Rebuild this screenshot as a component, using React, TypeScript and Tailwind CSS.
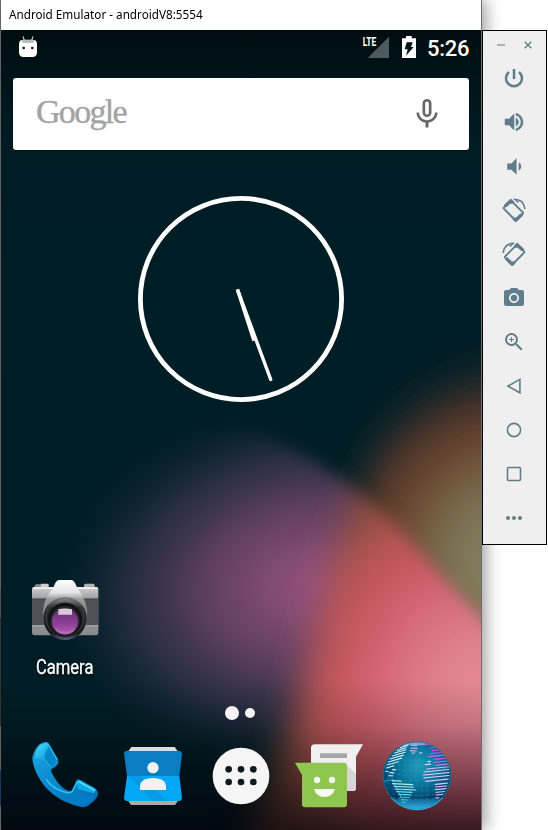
import React from "react";
import {
  MdVolumeDown,
  MdCameraAlt,
  MdZoomIn,
  MdMoreHoriz,
  MdMicNone,
} from "react-icons/md";

function Wallpaper() {
  return (
    <svg className="absolute inset-0 h-full w-full" viewBox="1 30 480 800" preserveAspectRatio="none">
      <defs>
        <linearGradient id="base" x1="0" y1="0" x2="0" y2="1">
          <stop offset="0" stopColor="#001b22" />
          <stop offset="0.3" stopColor="#001e26" />
          <stop offset="1" stopColor="#001d25" />
        </linearGradient>
        <radialGradient id="olive" gradientUnits="userSpaceOnUse" cx="520" cy="565" r="205">
          <stop offset="0" stopColor="#8c8664" />
          <stop offset="0.22" stopColor="#837b5b" />
          <stop offset="0.38" stopColor="#787050" />
          <stop offset="0.6" stopColor="#6f472f" />
          <stop offset="0.78" stopColor="#5c392b" stopOpacity="0.9" />
          <stop offset="1" stopColor="#3a2a2a" stopOpacity="0.1" />
        </radialGradient>
        <radialGradient
          id="purple"
          gradientUnits="userSpaceOnUse"
          cx="0"
          cy="0"
          r="1"
          gradientTransform="translate(318 585) rotate(-6) scale(262 188)"
        >
          <stop offset="0" stopColor="#92507f" />
          <stop offset="0.2" stopColor="#7f4a72" />
          <stop offset="0.45" stopColor="#604061" stopOpacity="0.94" />
          <stop offset="0.7" stopColor="#3d3750" stopOpacity="0.68" />
          <stop offset="0.86" stopColor="#2a3144" stopOpacity="0.32" />
          <stop offset="1" stopColor="#1a2c3c" stopOpacity="0" />
        </radialGradient>
        <radialGradient id="red" gradientUnits="userSpaceOnUse" cx="490" cy="690" r="245">
          <stop offset="0" stopColor="#e68d98" />
          <stop offset="0.2" stopColor="#e08390" />
          <stop offset="0.42" stopColor="#d66a7c" />
          <stop offset="0.55" stopColor="#cb5b66" />
          <stop offset="0.7" stopColor="#bd5556" />
          <stop offset="0.85" stopColor="#94503f" />
          <stop offset="1" stopColor="#6a4230" />
        </radialGradient>
        <linearGradient id="shade" gradientUnits="userSpaceOnUse" x1="0" y1="680" x2="0" y2="830">
          <stop offset="0" stopColor="#000" stopOpacity="0" />
          <stop offset="0.3" stopColor="#000" stopOpacity="0.13" />
          <stop offset="0.65" stopColor="#020006" stopOpacity="0.42" />
          <stop offset="1" stopColor="#020008" stopOpacity="0.72" />
        </linearGradient>
        <linearGradient id="topShade" gradientUnits="userSpaceOnUse" x1="0" y1="30" x2="0" y2="150">
          <stop offset="0" stopColor="#000" stopOpacity="0.5" />
          <stop offset="1" stopColor="#000" stopOpacity="0" />
        </linearGradient>
        <filter id="b8" x="-20%" y="-20%" width="140%" height="140%">
          <feGaussianBlur stdDeviation="8" />
        </filter>
        <filter id="b18" x="-30%" y="-30%" width="160%" height="160%">
          <feGaussianBlur stdDeviation="18" />
        </filter>
        <mask id="petal" maskUnits="userSpaceOnUse" x="-60" y="300" width="660" height="640">
          <path
            d="M-40 480 C60 410 180 405 250 430 C310 450 365 490 410 540 C445 580 485 624 560 690 L560 930 L-40 930 Z"
            fill="#fff"
            filter="url(#b8)"
          />
        </mask>
      </defs>
      <rect x="1" y="30" width="480" height="800" fill="url(#base)" />
      <path
        d="M350 520 C365 430 420 360 530 340 L560 740 L400 720 Z"
        fill="url(#olive)"
        filter="url(#b18)"
      />
      <g mask="url(#petal)">
        <rect x="1" y="400" width="480" height="430" fill="url(#purple)" />
        <path
          d="M376 440 C342 530 322 590 308 660 C296 720 270 780 236 880 L620 880 L620 440 Z"
          fill="url(#red)"
          filter="url(#b18)"
        />
      </g>
      <rect x="1" y="680" width="480" height="150" fill="url(#shade)" />
      <rect x="1" y="30" width="480" height="120" fill="url(#topShade)" />
    </svg>
  );
}

function StatusBar() {
  return (
    <div className="flex h-9 items-start pl-[17px] pr-3 pt-[5px]">
      <svg className="h-[23px] w-5" viewBox="54 105 60 69">
        <path d="M69 109l4 12M99 109l-4 12" stroke="#e8eaea" strokeWidth="3" />
        <path d="M57 132Q57 119 71 119H97Q111 119 111 132V157Q111 171 97 171H71Q57 171 57 157Z" fill="#fff" />
        <path d="M64 120H104L100 129H68Z" fill="#b9bfc0" />
        <circle cx="71" cy="144" r="4" fill="#0a1a1f" />
        <circle cx="97" cy="144" r="4" fill="#0a1a1f" />
      </svg>
      <svg className="ml-auto h-[25px] w-[55px]" viewBox="186 105 165 75">
        <path d="M267 110V174H203Z" fill="#4d5a5e" />
        <text
          x="188"
          y="139"
          fontFamily="Roboto, sans-serif"
          fontWeight="700"
          fontSize="38"
          textLength="41"
          lengthAdjust="spacingAndGlyphs"
          fill="#fff"
        >
          LTE
        </text>
        <path d="M318 108H335V115H348V174H306V115H318Z" fill="#fff" />
        <path d="M320 127H338L333 141H341L318 167L323 148H314Z" fill="#001318" />
      </svg>
      <span className="ml-[10px] mt-[1px] w-[42px] whitespace-nowrap font-['Roboto',sans-serif] text-[22px] font-medium leading-[26px] tracking-[-0.3px] text-white">
        5:26
      </span>
    </div>
  );
}

function Clock() {
  return (
    <svg className="mx-auto mt-[46px] block h-[206px] w-[206px] shrink-0" viewBox="138 196 206 206">
      <circle cx="241" cy="299" r="100.6" fill="none" stroke="#fff" strokeWidth="4.8" />
      <path d="M238 291L270.7 379.5" stroke="#fff" strokeWidth="3.4" strokeLinecap="round" />
      <path d="M238 291L253.5 339" stroke="#fff" strokeWidth="3.6" strokeLinecap="square" />
    </svg>
  );
}

function CameraIcon() {
  return (
    <svg className="h-[75px] w-[88px]" viewBox="3 15 264 225">
      <defs>
        <linearGradient id="camBody" x1="0" y1="0" x2="0" y2="1">
          <stop offset="0" stopColor="#d2d2d2" />
          <stop offset="0.22" stopColor="#a2a3a4" />
          <stop offset="1" stopColor="#88898c" />
        </linearGradient>
        <linearGradient id="camTop" x1="0" y1="0" x2="0" y2="1">
          <stop offset="0" stopColor="#fff" />
          <stop offset="0.28" stopColor="#e4e4e4" />
          <stop offset="0.42" stopColor="#9a9c9c" />
          <stop offset="1" stopColor="#606263" />
        </linearGradient>
        <linearGradient id="camLens" x1="0" y1="0" x2="0" y2="1">
          <stop offset="0" stopColor="#6a3270" />
          <stop offset="0.55" stopColor="#8a3c92" />
          <stop offset="1" stopColor="#b05fb5" />
        </linearGradient>
        <linearGradient id="camRim" x1="0" y1="0" x2="0" y2="1">
          <stop offset="0" stopColor="#9b9d9f" />
          <stop offset="0.25" stopColor="#2b2c2e" />
          <stop offset="0.85" stopColor="#17181a" />
          <stop offset="1" stopColor="#62608a" />
        </linearGradient>
      </defs>
      <rect x="44" y="43" width="42" height="18" rx="5" fill="#8b8d8e" />
      <rect x="62" y="41" width="24" height="10" rx="4" fill="#d0d0d0" />
      <rect x="192" y="41" width="32" height="18" rx="5" fill="#b0b1b2" />
      <rect x="36" y="51" width="199" height="145" rx="7" fill="url(#camBody)" />
      <rect x="38" y="52" width="195" height="5" rx="2" fill="#f1f1f1" />
      <rect x="36" y="86" width="199" height="80" fill="#505156" />
      <rect x="36" y="86" width="199" height="2" fill="#383940" />
      <rect x="36" y="166" width="199" height="3" fill="#b0b1b3" />
      <path
        d="M116 30H154Q160 30 165 39L173 56Q198 86 202 125L198 166H72L68 125Q72 86 98 56L106 39Q111 30 116 30Z"
        fill="url(#camTop)"
      />
      <circle cx="135" cy="145" r="65" fill="url(#camRim)" />
      <circle cx="135" cy="142" r="57" fill="none" stroke="#505358" strokeWidth="2" />
      <circle cx="135" cy="149" r="51" fill="#111214" />
      <circle cx="135" cy="153" r="44" fill="#2b2930" />
      <circle cx="135" cy="154" r="39" fill="url(#camLens)" />
      <path d="M103 174A37 37 0 0 0 168 174Q135 196 103 174Z" fill="#d392d4" opacity="0.35" />
      <path d="M115 118Q135 113 156 118V134H115Z" fill="#d9c9dc" />
    </svg>
  );
}

function PhoneIcon() {
  return (
    <svg className="h-[88px] w-[88px]" viewBox="63 6 264 264">
      <defs>
        <linearGradient id="ph" x1="0" y1="0" x2="1" y2="1">
          <stop offset="0" stopColor="#19a8e4" />
          <stop offset="0.5" stopColor="#0a86cc" />
          <stop offset="1" stopColor="#036bb4" />
        </linearGradient>
        <linearGradient id="phTop" x1="0" y1="0" x2="1" y2="1">
          <stop offset="0" stopColor="#4ce4fa" />
          <stop offset="1" stopColor="#0c98dc" />
        </linearGradient>
        <filter id="phSoft" x="-5%" y="-5%" width="110%" height="110%">
          <feGaussianBlur stdDeviation="1.6" />
        </filter>
      </defs>
      <path
        d="M140 36Q131 35 119 43Q104 54 97 83Q99 123 134 169Q178 219 248 232Q261 232 274 219Q295 204 294 188Q292 180 285 174L240 149Q231 145 229 152L216 185Q182 183 153 124L155 116Q162 117 175 100Q176 93 173 86L149 45Q146 38 140 36Z"
        fill="url(#ph)"
      />
      <g filter="url(#phSoft)">
        <path d="M105 84Q107 60 121 45L140 38L147 48Q134 67 132 83Q118 82 105 84Z" fill="url(#phTop)" />
        <path d="M231 154L240 151L285 177Q288 184 282 190L234 178Q228 166 231 154Z" fill="#11aae6" />
        <path d="M134 86Q136 65 147 50L171 91L157 110Z" fill="#0687cb" />
        <path d="M106 86L132 86L150 110" fill="none" stroke="#25b2e6" strokeWidth="3" />
        <path d="M237 155L284 181" fill="none" stroke="#4cdcf8" strokeWidth="5" strokeLinecap="round" />
        <path d="M140 150Q163 182 207 189L217 184L231 156" fill="none" stroke="#28c4ee" strokeWidth="5" strokeLinecap="round" strokeLinejoin="round" />
        <path d="M215 190L270 199L287 192L270 217L250 228Q225 224 208 217Z" fill="#057dc5" />
        <path d="M140 40L148 48L172 90" fill="none" stroke="#31cdf5" strokeWidth="3" />
      </g>
    </svg>
  );
}

function ContactsIcon() {
  return (
    <svg className="h-[88px] w-[88px]" viewBox="327 6 264 264">
      <path d="M394 51H524L535 66H383Z" fill="#dedede" />
      <path d="M383 211H535L525 225H393Z" fill="#aaa" />
      <path d="M379 63H539Q546 64 546 71L538 138H381L372 71Q372 64 379 63Z" fill="#0b7dc2" />
      <path d="M381 138H538L546 203Q546 211 539 213H379Q372 211 372 203Z" fill="#06a8f5" />
      <path d="M384 138L459 213H499L422 138Z" fill="#059be6" />
      <circle cx="459" cy="113" r="17" fill="#f2f2f2" />
      <path d="M420 180V169Q421 145 459 144Q497 145 498 169V180Z" fill="#f2f2f2" />
    </svg>
  );
}

function AppsIcon() {
  return (
    <svg className="h-[88px] w-[88px]" viewBox="21 111 264 264">
      <circle cx="153" cy="243" r="85" fill="#f5f5f5" />
      {[116, 153, 190].map((x) => (
        <g key={x} fill="#0d1a20">
          <circle cx={x} cy="223" r="10" />
          <circle cx={x} cy="261" r="10" />
        </g>
      ))}
    </svg>
  );
}

function MessengerIcon() {
  return (
    <svg className="h-[88px] w-[88px]" viewBox="285 111 264 264">
      <path d="M374 148H519L498 185V278Q498 288 488 288H363V159Q363 148 374 148Z" fill="#f0f0f0" />
      <path d="M463 203L498 238V278Q498 288 488 288H463Z" fill="#d6d6d6" />
      <rect x="390" y="175" width="81" height="14" fill="#a6a6a6" />
      <path d="M315 203H461Q471 203 471 213V327Q471 337 461 337H346Q336 337 336 327V240Z" fill="#8fc650" />
      <circle cx="381" cy="255" r="9.5" fill="#f7f9f3" />
      <circle cx="426" cy="255" r="9.5" fill="#f7f9f3" />
      <path d="M372 282H435Q427 306 403 306Q380 306 372 282Z" fill="#f7f9f3" />
    </svg>
  );
}

const landStripes: [number, number, number, string][] = [
  [100, 46, 16, "#a8d4ea"], [90, 53, 24, "#c9e6f0"], [82, 61, 26, "#d6edf4"], [74, 69, 34, "#d6edf4"],
  [67, 78, 38, "#d6edf4"], [60, 87, 40, "#d6edf4"], [55, 96, 40, "#d6edf4"], [51, 105, 34, "#c4e8f0"],
  [49, 114, 22, "#c4e8f0"], [47, 124, 8, "#aadfe9"], [68, 119, 9, "#d6edf4"],
  [60, 128, 11, "#d6edf4"], [56, 137, 12, "#aadfe9"],
  [124, 46, 16, "#c8a6e0"], [122, 54, 20, "#d7b8e6"], [121, 62, 18, "#d7b8e6"], [126, 69, 8, "#d7b8e6"],
  [148, 69, 8, "#b7d8f0"],
  [66, 152, 28, "#9ae4ea"], [68, 161, 60, "#b4eef0"], [72, 169, 58, "#9ee8ec"], [76, 177, 60, "#a9edef"],
  [80, 185, 46, "#6fdfe5"], [86, 193, 36, "#53dbe3"], [90, 201, 28, "#43d2df"], [94, 209, 20, "#36c6dc"],
  [96, 217, 10, "#2fbddb"],
  [164, 44, 22, "#c25bf0"], [180, 54, 24, "#d643f5"], [186, 62, 26, "#dc3df5"], [182, 71, 34, "#d24cf2"],
  [176, 80, 46, "#cf62f0"], [194, 88, 36, "#d850f4"], [174, 95, 8, "#dfd2f2"], [192, 97, 40, "#d35cf2"],
  [166, 104, 16, "#dfd2f2"], [198, 106, 36, "#d277f2"], [170, 117, 66, "#dcb9f2"],
  [162, 126, 74, "#e2caf4"], [161, 135, 76, "#e6d2f6"], [161, 144, 76, "#e6d2f6"], [167, 154, 68, "#dcbcf2"],
  [196, 163, 36, "#e2caf4"], [196, 171, 34, "#d3a8ee"], [196, 179, 32, "#dcbaf2"], [198, 187, 26, "#d3a8ee"],
  [198, 195, 20, "#dcbaf2"], [196, 204, 10, "#d3a8ee"],
];

function BrowserIcon() {
  return (
    <svg className="h-[88px] w-[88px]" viewBox="9 6 264 264">
      <defs>
        <radialGradient id="sea" cx="0.52" cy="0.36" r="0.64">
          <stop offset="0" stopColor="#239bb9" />
          <stop offset="0.4" stopColor="#0c7aa0" />
          <stop offset="0.72" stopColor="#045177" />
          <stop offset="1" stopColor="#033e67" />
        </radialGradient>
        <linearGradient id="pole" x1="0" y1="0" x2="0" y2="1">
          <stop offset="0" stopColor="#052e50" stopOpacity="0" />
          <stop offset="0.5" stopColor="#07365f" />
          <stop offset="0.6" stopColor="#126f9e" />
          <stop offset="1" stopColor="#38b5e8" />
        </linearGradient>
        <clipPath id="ball">
          <circle cx="141" cy="137" r="102" />
        </clipPath>
      </defs>
      <circle cx="141" cy="137" r="102" fill="url(#sea)" />
      <g clipPath="url(#ball)">
        <path d="M39 165Q90 205 141 205Q195 203 243 165V240H39Z" fill="url(#pole)" />
        <path d="M95 42Q141 25 187 43Q141 50 95 42Z" fill="#76a9dc" />
        {[92, 107, 122, 137, 152, 167, 182, 197, 208].map((y) => (
          <path key={y} d={"M50 " + (y - 8) + "Q141 " + (y + 8) + " 232 " + (y - 8)} stroke="#2a9ed0" strokeWidth="2.5" strokeDasharray="8 9" fill="none" opacity="0.6" />
        ))}
        <path d="M42 154L64 150M65 144L80 176L103 218" stroke="#2d9dcc" strokeWidth="3" fill="none" />
        {landStripes.map(([x, y, w, c]) => (
          <path
            key={x + "-" + y}
            d={"M" + x + " " + y + "l" + w + " " + (x + w / 2 < 141 ? w * 0.05 - (x < 105 && y < 118 ? w * 0.34 : 0) : -w * 0.1)}
            stroke={c}
            strokeWidth="3.4"
            strokeLinecap="round"
          />
        ))}
      </g>
      <circle cx="141" cy="137" r="101" fill="none" stroke="#1778a0" strokeWidth="2.5" />
      <path d="M63 203A102 102 0 0 0 219 203" fill="none" stroke="#35b7e9" strokeWidth="3" />
    </svg>
  );
}

function RotateIcon({ flip }: { flip?: boolean }) {
  return (
    <svg className={flip ? "h-6 w-6 -scale-x-100" : "h-6 w-6"} viewBox="0 0 24 24" fill="none" stroke="#607d8b">
      <path d="M8 3.2L1.9 9.3Q1.3 10 1.9 10.7L13.1 22Q13.8 22.6 14.5 22L20.8 15.7Q21.4 15 20.8 14.3L9.6 3.2Q8.8 2.4 8 3.2Z" strokeWidth="1.9" />
      <path d="M3 8.2L8.8 2.9L11 5M11.6 20.2L13.8 22.2L19.8 16.4" strokeWidth="3.4" />
      <path d="M11.8 1.3Q21.8 1.2 22.9 11" strokeWidth="1.6" />
      <path d="M11.3 0.6L15.5 5L17 3.5Z" fill="#607d8b" stroke="none" />
    </svg>
  );
}

const toolIcons: React.ReactNode[] = [
  <svg className="h-6 w-6" viewBox="0 0 24 24" fill="none" stroke="#607d8b" strokeWidth="2.5">
    <path d="M12 3V13M7 5.9A8 8 0 1 0 17 5.9" />
  </svg>,
  <svg className="h-6 w-6" viewBox="0 0 24 24" fill="#607d8b" stroke="#607d8b" strokeWidth="0.5">
    <path d="M3 9v6h4l5 5V4L7 9H3zm13.5 3c0-1.77-1.02-3.29-2.5-4.03v8.05c1.48-.73 2.5-2.25 2.5-4.02zM14 3.23v2.06c2.89.86 5 3.54 5 6.71s-2.11 5.85-5 6.71v2.06c4.01-.91 7-4.49 7-8.77s-2.99-7.86-7-8.77z" />
  </svg>,
  <MdVolumeDown size={25} />,
  <RotateIcon />,
  <RotateIcon flip />,
  <MdCameraAlt size={24} />,
  <MdZoomIn size={24} />,
  <svg className="h-6 w-6" viewBox="0 0 24 24" fill="none" stroke="#607d8b" strokeWidth="1.6">
    <path d="M17.9 5.4V18.8L6 12.1Z" />
  </svg>,
  <svg className="h-6 w-6" viewBox="0 0 24 24" fill="none" stroke="#607d8b" strokeWidth="1.6">
    <circle cx="12" cy="12" r="6.6" />
  </svg>,
  <svg className="h-6 w-6" viewBox="0 0 24 24" fill="none" stroke="#607d8b" strokeWidth="1.6">
    <rect x="5.5" y="5.5" width="13" height="13" rx="1" />
  </svg>,
  <MdMoreHoriz size={24} />,
];

function Toolbar() {
  return (
    <div className="relative mt-[30px] flex h-[515px] w-[65px] flex-col border border-black bg-[#efefef] text-[#607d8b]">
      <div className="flex h-[25px] shrink-0 items-center pl-[14px] pt-[3px]">
        <div className="h-[2px] w-2 bg-[#a0b1b9]" />
        <svg className="ml-[19px] h-2 w-2" viewBox="0 0 8 8" stroke="#607d8b" strokeWidth="1.3">
          <path d="M0.7 0.7L7.3 7.3M7.3 0.7L0.7 7.3" />
        </svg>
      </div>
      {toolIcons.map((icon, i) => (
        <div key={i} className="flex h-11 w-[62px] shrink-0 items-center justify-center">
          {icon}
        </div>
      ))}
    </div>
  );
}

export default function App() {
  return (
    <div className="flex h-[830px] w-[548px] overflow-hidden bg-white">
      <div className="flex w-px shrink-0 flex-col bg-[#747474]">
        <div className="h-[588px]" />
        <div className="h-[30px] bg-[#606060]" />
        <div className="h-[108px] bg-[#3c3c3c]" />
        <div className="h-11 bg-[#77736a]" />
        <div className="h-9 bg-[#233f6b]" />
      </div>
      <div className="flex w-[481px] shrink-0 flex-col border-r border-[#6e6e6e] shadow-[3px_0_16px_rgba(0,0,0,0.42)]">
        <div className="h-[30px] shrink-0 bg-white pl-2 font-['Noto_Sans','Open_Sans',sans-serif] text-[12px] leading-[29px] text-black">
          <span className="inline-block origin-left scale-x-[0.975] whitespace-nowrap">Android Emulator - androidV8:5554</span>
        </div>
        <div className="relative h-[800px] w-[480px] overflow-hidden bg-[#001e26]">
          <Wallpaper />
          <div className="relative flex h-full flex-col">
            <StatusBar />
            <div className="mx-3 mt-3 flex h-[72px] w-[456px] shrink-0 items-center rounded-[3px] bg-white pl-[23px] pr-[24px] shadow-[0_1px_1px_rgba(0,0,0,0.5)]">
              <span className="-mt-1 font-['Liberation_Serif',serif] text-[34px] leading-10 tracking-[-1.7px] text-[#a3a3a3] [-webkit-text-stroke:0.4px_#a3a3a3]">
                Google
              </span>
              <MdMicNone className="ml-auto" size={36} color="#666" />
            </div>
            <Clock />
            <div className="ml-5 mt-[173px] flex h-[107px] w-[88px] shrink-0 flex-col items-center">
              <CameraIcon />
              <span className="mt-[5px] scale-x-[0.83] font-['Roboto',sans-serif] text-[20px] leading-6 text-white [-webkit-text-stroke:0.3px_#fff] [text-shadow:0_1px_3px_#000]">
                Camera
              </span>
            </div>
            <div className="ml-[224px] mt-6 flex h-[14px] shrink-0 items-center gap-[6px]">
              <div className="h-[14px] w-[14px] rounded-full bg-[#f5f5f5]" />
              <div className="h-[10px] w-[10px] rounded-full bg-[#f5f5f5]" />
            </div>
            <div className="mt-3 flex pl-5">
              <PhoneIcon />
              <ContactsIcon />
              <AppsIcon />
              <MessengerIcon />
              <BrowserIcon />
            </div>
          </div>
        </div>
      </div>
      <Toolbar />
    </div>
  );
}
